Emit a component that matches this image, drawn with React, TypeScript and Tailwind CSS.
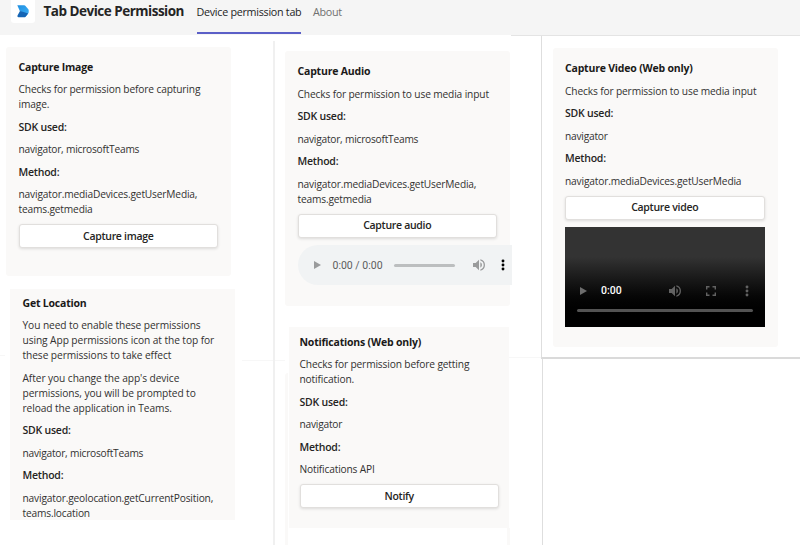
import type { ReactNode } from "react";

function Title({ children }: { children: ReactNode }) {
  return <h2 className="whitespace-nowrap font-bold tracking-[-0.2px] text-[#1b1a19]">{children}</h2>;
}

function Label({ children }: { children: ReactNode }) {
  return <p className="whitespace-nowrap font-semibold tracking-[-0.22px] text-[#252423]">{children}</p>;
}

function Lines({ lines, className = "tracking-[-0.23px]" }: { lines: string[]; className?: string }) {
  return (
    <div className="text-[10.2px] text-[#323130]">
      {lines.map((line) => (
        <p key={line} className={`whitespace-nowrap ${className}`}>{line}</p>
      ))}
    </div>
  );
}

function Details({ title, intro, sdk, method }: { title: string; intro: string[][]; sdk: string; method: string[] }) {
  return (
    <div className="flex flex-col gap-[7.5px]">
      <Title>{title}</Title>
      {intro.map((lines) => (
        <Lines key={lines[0]} lines={lines} className={intro.length > 1 ? "tracking-[-0.08px]" : "tracking-[-0.14px]"} />
      ))}
      <Label>SDK used:</Label>
      <Lines lines={[sdk]} />
      <Label>Method:</Label>
      <Lines lines={method} className="tracking-[-0.17px]" />
    </div>
  );
}

function ActionButton({ children }: { children: ReactNode }) {
  return (
    <button className="flex h-6 w-[199.5px] shrink-0 items-center justify-center rounded-[3px] border border-[#e1dfdd] bg-white font-semibold tracking-[-0.3px] text-[#252423] shadow-[0_1px_3px_rgba(0,0,0,0.12)]">
      {children}
    </button>
  );
}

function PlayIcon({ className }: { className: string }) {
  return (
    <svg viewBox="0 0 7 8" className={className} fill="currentColor">
      <path d="M0 0v8l7-4z" />
    </svg>
  );
}

function VolumeIcon({ className }: { className: string }) {
  return (
    <svg viewBox="3 3 18 18" className={className} fill="currentColor">
      <path d="M3 9v6h4l5 5V4L7 9H3zm13.500 3A4.500 4.500 0 0 0 14 7.970v8.050A4.500 4.500 0 0 0 16.500 12zM14 3.230v2.060a7 7 0 0 1 0 13.420v2.060a9 9 0 0 0 0-17.540z" />
    </svg>
  );
}

function MoreIcon({ className }: { className: string }) {
  return (
    <svg viewBox="0 0 4 12" className={className} fill="currentColor">
      <circle cx="2" cy="2" r="1.450" />
      <circle cx="2" cy="6" r="1.450" />
      <circle cx="2" cy="10" r="1.450" />
    </svg>
  );
}

function AudioPlayer() {
  return (
    <div className="flex h-10 w-[214px] shrink-0 items-center rounded-l-full bg-[#f1f3f4]">
      <PlayIcon className="ml-[16.5px] h-2 w-[7px] text-[#9a9b9c]" />
      <span className="ml-[11.5px] w-[51px] whitespace-nowrap font-['Roboto',sans-serif] text-[10.5px] text-[#5b5c5d]">0:00 / 0:00</span>
      <div className="ml-[10px] h-[3px] w-[61px] rounded-full bg-[#bcbebf]" />
      <VolumeIcon className="ml-[18px] h-3 w-3 text-[#9a9b9c]" />
      <MoreIcon className="ml-[16px] h-3 w-1 text-black" />
    </div>
  );
}

function VideoPlayer() {
  return (
    <div className="flex h-[100px] w-[200px] shrink-0 flex-col bg-linear-to-b from-[#333] from-30% to-black to-95% pt-[58px]">
      <div className="flex h-3 items-center">
        <PlayIcon className="ml-[15px] h-2 w-[7px] text-[#6d6d6d]" />
        <span className="ml-[14px] w-[21px] whitespace-nowrap font-['Roboto',sans-serif] text-[10.5px] font-medium text-white">0:00</span>
        <VolumeIcon className="ml-[47px] h-3 w-3 text-[#626262]" />
        <svg viewBox="0 0 10 10" className="ml-[25px] size-[10px]" fill="none" stroke="#626262" strokeWidth="1.400">
          <path d="M.7 3.500V.7h2.800M6.500.7h2.800v2.800M9.300 6.500v2.800H6.500M3.500 9.300H.7V6.500" />
        </svg>
        <MoreIcon className="ml-[29px] h-3 w-1 text-[#626262]" />
      </div>
      <div className="ml-3 mt-[12px] h-[3px] w-44 rounded-full bg-[#535353]" />
    </div>
  );
}

function AppLogo() {
  return (
    <div className="flex h-[23px] w-6 justify-center rounded-b-[3px] bg-white pt-[5px]">
      <svg viewBox="0 0 12 13" className="h-[13px] w-3">
        <defs>
          <linearGradient id="logo-top" x1="0" y1="0" x2="1" y2="1">
            <stop offset="0" stopColor="#1f8ee0" />
            <stop offset="1" stopColor="#3fb2f7" />
          </linearGradient>
        </defs>
        <path d="M.3.3h7q.6 0 1 .4l3 3.500q.4.500.4 1.100v1.900q0 .6-.4 1.100L8.500 12 6 8 2.800 6z" fill="url(#logo-top)" />
        <path d="M3 6 .5 10.600q-.5 1.600.9 1.600h6q.7 0 1.100-.5l2.700-3.200L6.500 7z" fill="#1565b5" />
      </svg>
    </div>
  );
}

function Header() {
  return (
    <header className="h-9 shrink-0">
      <div className="flex h-[35px] bg-[#f5f5f5]">
        <div className="ml-[10.5px]">
          <AppLogo />
        </div>
        <h1 className="ml-[9px] w-[153px] whitespace-nowrap pt-px text-[13.5px] font-bold leading-[21px] tracking-[-0.5px] text-[#242424]">Tab Device Permission</h1>
        <nav className="flex text-[10.75px] leading-[24px] tracking-[-0.28px]">
          <span className="h-[34px] w-[104.5px] whitespace-nowrap border-b-2 border-[#5b5fc7] text-[#242424]">Device permission tab</span>
          <span className="ml-3 text-[#707070]">About</span>
        </nav>
      </div>
      <div className="ml-[511px] h-px bg-[#e4e4e4]" />
    </header>
  );
}

export default function App() {
  return (
    <div className="flex h-[545px] w-[800px] flex-col overflow-hidden bg-white font-['Open_Sans',sans-serif] text-[10.5px] leading-[15px]">
      <Header />
      <main className="flex min-h-0 flex-1">
        <div className="w-[273px] shrink-0 pt-[11px]">
          <section className="ml-[6px] h-[229px] w-[225px] rounded-[3px] bg-[#faf9f8] pl-[12.5px] pt-[12.5px]">
            <Details
              title="Capture Image"
              intro={[["Checks for permission before capturing", "image."]]}
              sdk="navigator, microsoftTeams"
              method={["navigator.mediaDevices.getUserMedia,", "teams.getmedia"]}
            />
            <div className="mt-[7px]"><ActionButton>Capture image</ActionButton></div>
          </section>
          <div className="mt-[13px] flex items-start">
            <div className="mr-[5px] mt-[66px] h-px w-[5px] bg-[#f7f7f7]" />
            <section className="h-[231px] w-[225px] bg-[#faf9f8] pl-[12.5px] pt-[6.5px]">
              <Details
                title="Get Location"
                intro={[
                  ["You need to enable these permissions", "using App permissions icon at the top for", "these permissions to take effect"],
                  ["After you change the app's device", "permissions, you will be prompted to", "reload the application in Teams."],
                ]}
                sdk="navigator, microsoftTeams"
                method={["navigator.geolocation.getCurrentPosition,", "teams.location"]}
              />
            </section>
            <div className="ml-[7px] mt-[71px] h-px flex-1 bg-[#f7f7f7]" />
          </div>
        </div>
        <div className="mt-[5px] w-[2px] shrink-0 bg-[#f0f0f0]" />
        <div className="flex w-[266px] shrink-0 flex-col pt-[15px]">
          <section className="ml-[10px] h-[255px] w-[225px] shrink-0 rounded-[3px] bg-[#faf9f8] pl-[12.5px] pt-[13px]">
            <Details
              title="Capture Audio"
              intro={[["Checks for permission to use media input"]]}
              sdk="navigator, microsoftTeams"
              method={["navigator.mediaDevices.getUserMedia,", "teams.getmedia"]}
            />
            <div className="mt-[7px]"><ActionButton>Capture audio</ActionButton></div>
            <div className="mt-[7.5px]"><AudioPlayer /></div>
          </section>
          <div className="mt-[21px] flex h-[201px] shrink-0 items-start">
            <div className="mt-[33px] h-px w-[10px] bg-[#f7f7f7]" />
            <div className="mr-px mt-[46px] h-[155px] w-[3px] rounded-tl-[3px] bg-[#faf9f8]" />
            <section className="h-full w-[220px] bg-[#faf9f8] pl-[10.5px] pt-[7.5px]">
              <Details
                title="Notifications (Web only)"
                intro={[["Checks for permission before getting", "notification."]]}
                sdk="navigator"
                method={["Notifications API"]}
              />
              <div className="mt-[7px]"><ActionButton>Notify</ActionButton></div>
            </section>
            <div className="mt-[30px] h-px flex-1 bg-[#f7f7f7]" />
          </div>
          <div className="ml-[10px] h-[17px] w-[225px] border-x-[3px] border-[#faf9f8]" />
        </div>
        <div className="flex flex-1 flex-col">
          <div className="h-[323px] shrink-0 border-b-2 border-l border-b-[#dadada] border-l-[#dedede] pl-[11px] pt-3">
            <section className="h-[299px] w-[225px] rounded-[3px] bg-[#faf9f8] pl-3 pt-[13px]">
              <Details
                title="Capture Video (Web only)"
                intro={[["Checks for permission to use media input"]]}
                sdk="navigator"
                method={["navigator.mediaDevices.getUserMedia"]}
              />
              <div className="mt-[7px]"><ActionButton>Capture video</ActionButton></div>
              <div className="mt-[7px]"><VideoPlayer /></div>
            </section>
          </div>
          <div className="ml-px flex-1 border-l border-[#dedede]" />
        </div>
      </main>
    </div>
  );
}
